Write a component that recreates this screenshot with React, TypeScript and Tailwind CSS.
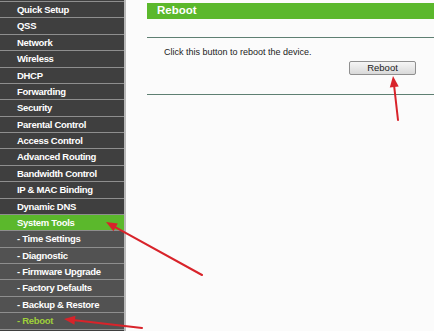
const menu = [
  'Quick Setup',
  'QSS',
  'Network',
  'Wireless',
  'DHCP',
  'Forwarding',
  'Security',
  'Parental Control',
  'Access Control',
  'Advanced Routing',
  'Bandwidth Control',
  'IP & MAC Binding',
  'Dynamic DNS',
]

const subMenu = [
  'Time Settings',
  'Diagnostic',
  'Firmware Upgrade',
  'Factory Defaults',
  'Backup & Restore',
  'Reboot',
]

function Arrow({ x1, y1, x2, y2 }: { x1: number; y1: number; x2: number; y2: number }) {
  // tail (x1,y1) -> tip (x2,y2)
  const a = Math.atan2(y2 - y1, x2 - x1)
  const len = 11
  const w = 4.5
  const bx = x2 - Math.cos(a) * len
  const by = y2 - Math.sin(a) * len
  const px = -Math.sin(a) * w
  const py = Math.cos(a) * w
  return (
    <g>
      <line x1={x1} y1={y1} x2={bx} y2={by} stroke="#d8232a" strokeWidth={2} strokeLinecap="round" />
      <polygon points={`${x2},${y2} ${bx + px},${by + py} ${bx - px},${by - py}`} fill="#d8232a" />
    </g>
  )
}

export default function App() {
  return (
    <div className="relative w-[434px] h-[331px] overflow-hidden bg-[#fbfbfb] flex font-['Liberation_Sans',Arial,sans-serif]">
      <div className="w-[126px] shrink-0 bg-[#3f3f3f] border-r-2 border-[#b9b9b9] flex flex-col pt-px">
        {menu.map((m) => (
          <div
            key={m}
            className="h-[16.38px] shrink-0 border-t border-[#8e8e8e] flex items-center pl-[17px] pt-px text-[9.5px] font-bold text-white tracking-[-0.3px]"
          >
            {m}
          </div>
        ))}
        <div className="h-[16.38px] shrink-0 border-t border-[#8e8e8e] bg-[#5bb82c] flex items-center pl-[17px] pt-px text-[9.5px] font-bold text-white tracking-[-0.3px]">
          System Tools
        </div>
        {subMenu.map((m) => (
          <div
            key={m}
            className={`h-[16.38px] shrink-0 border-t border-[#8e8e8e] bg-[#525252] flex items-center pl-[17px] pt-px text-[9.5px] font-bold tracking-[-0.3px] ${
              m === 'Reboot' ? 'text-[#9fcf3a]' : 'text-white'
            }`}
          >
            - {m}
          </div>
        ))}
        <div className="flex-1 border-t border-[#8e8e8e] bg-[#3f3f3f]" />
      </div>

      <div className="flex-1 pl-[21px] pt-[3px]">
        <div className="h-[16px] bg-[#5bb82c] flex items-center pl-[10px] text-[11.5px] font-bold text-white">
          Reboot
        </div>
        <div className="mt-[18px] h-px bg-[#5e7f72]" />
        <div className="pl-[17px] pt-[8px] text-[9px] leading-[12px] text-[#222]">
          Click this button to reboot the device.
        </div>
        <div className="flex pl-[202px] pt-[3px]">
          <button className="w-[67px] h-[14px] rounded-[2px] border border-[#8f8f8f] bg-gradient-to-b from-[#f6f6f6] to-[#d9d9d9] text-[9.5px] leading-none text-[#222]">
            Reboot
          </button>
        </div>
        <div className="mt-[19px] h-px bg-[#5e7f72]" />
      </div>

      <svg className="absolute inset-0 pointer-events-none" width={434} height={331}>
        <Arrow x1={202} y1={275} x2={106} y2={222} />
        <Arrow x1={142} y1={328} x2={64} y2={319} />
        <Arrow x1={398} y1={120} x2={393} y2={76} />
      </svg>
    </div>
  )
}
